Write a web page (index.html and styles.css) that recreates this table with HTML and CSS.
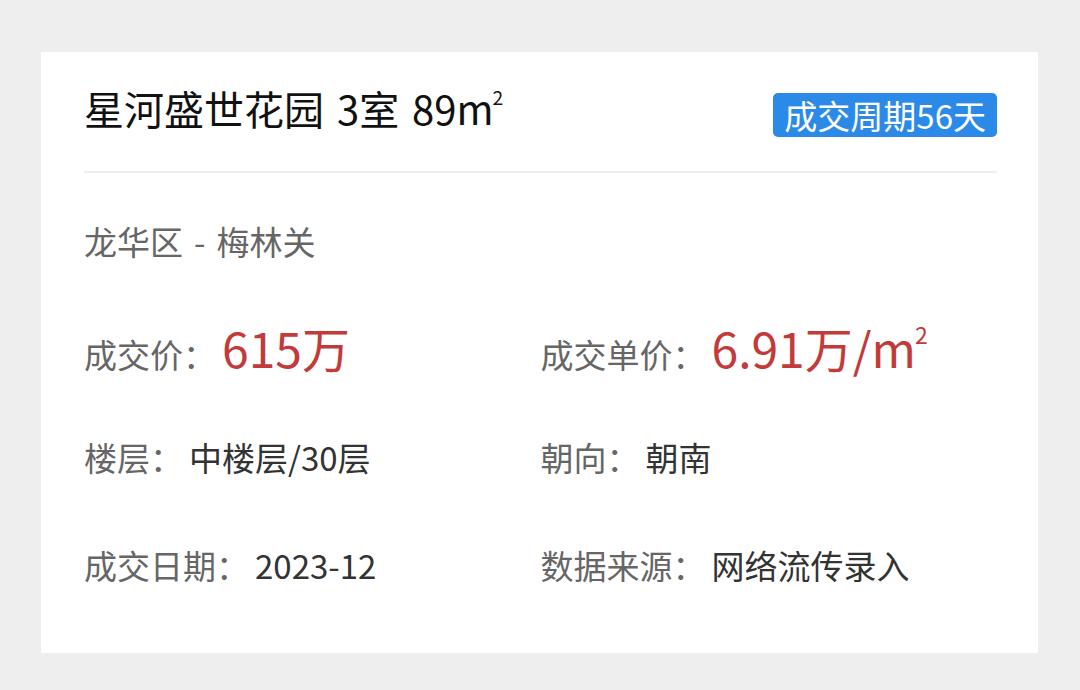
FILE: index.html
```html
<!DOCTYPE html>
<html lang="zh-CN">
<head>
<meta charset="utf-8">
<title>成交记录</title>
<link rel="stylesheet" href="styles.css">
</head>
<body>
<div class="card">
  <div class="header">
    <h1 class="title">星河盛世花园 3室 89m<span class="sq">2</span></h1>
    <span class="badge">成交周期56天</span>
  </div>
  <div class="divider"></div>
  <div class="location">龙华区<span class="sep">-</span>梅林关</div>
  <div class="row row-price">
    <div class="field">
      <span class="label">成交价：</span>
      <span class="price">615万</span>
    </div>
    <div class="field">
      <span class="label">成交单价：</span>
      <span class="price">6.91万/m<span class="sq">2</span></span>
    </div>
  </div>
  <div class="row row-floor">
    <div class="field">
      <span class="label">楼层：</span>
      <span class="value">中楼层/30层</span>
    </div>
    <div class="field">
      <span class="label">朝向：</span>
      <span class="value">朝南</span>
    </div>
  </div>
  <div class="row row-date">
    <div class="field">
      <span class="label">成交日期：</span>
      <span class="value">2023-12</span>
    </div>
    <div class="field">
      <span class="label">数据来源：</span>
      <span class="value">网络流传录入</span>
    </div>
  </div>
</div>
</body>
</html>
```

FILE: styles.css
```css
* {
  box-sizing: border-box;
}

html, body {
  margin: 0;
  padding: 0;
}

body {
  background: #eeeeee;
  font-family: "Noto Sans CJK SC", "Noto Sans", sans-serif;
  padding: 52px 42px 37px 41px;
}

.card {
  width: 997px;
  height: 601px;
  background: #ffffff;
  padding: 36px 41px 0 43px;
}

.header {
  display: flex;
  justify-content: space-between;
  align-items: flex-start;
}

.title {
  margin: 0;
  font-size: 40px;
  line-height: 1;
  font-weight: 400;
  color: #111111;
  word-spacing: 4px;
}

.sq {
  font-size: 0.48em;
  line-height: 1;
  vertical-align: top;
  margin-left: -1px;
}

.badge {
  margin-top: 5px;
  height: 44px;
  padding: 0 11px;
  display: flex;
  align-items: center;
  background: #2b8ae8;
  color: #ffffff;
  font-size: 33px;
  line-height: 1;
  border-radius: 5px;
}

.divider {
  margin-top: 34px;
  height: 2px;
  background: #eeeeee;
}

.location {
  margin-top: 52px;
  font-size: 33px;
  line-height: 1;
  color: #666666;
}

.sep {
  margin: 0 11px;
}

.row {
  display: flex;
}

.row-price {
  margin-top: 65px;
}

.row-floor {
  margin-top: 70px;
}

.row-date {
  margin-top: 75px;
}

.field {
  flex: 1;
  display: flex;
  align-items: baseline;
  gap: 6px;
}

.label {
  font-size: 33px;
  line-height: 1;
  color: #666666;
}

.value {
  font-size: 33px;
  line-height: 1;
  color: #333333;
}

.price {
  font-size: 48px;
  line-height: 1;
  color: #c23a3a;
}
```
